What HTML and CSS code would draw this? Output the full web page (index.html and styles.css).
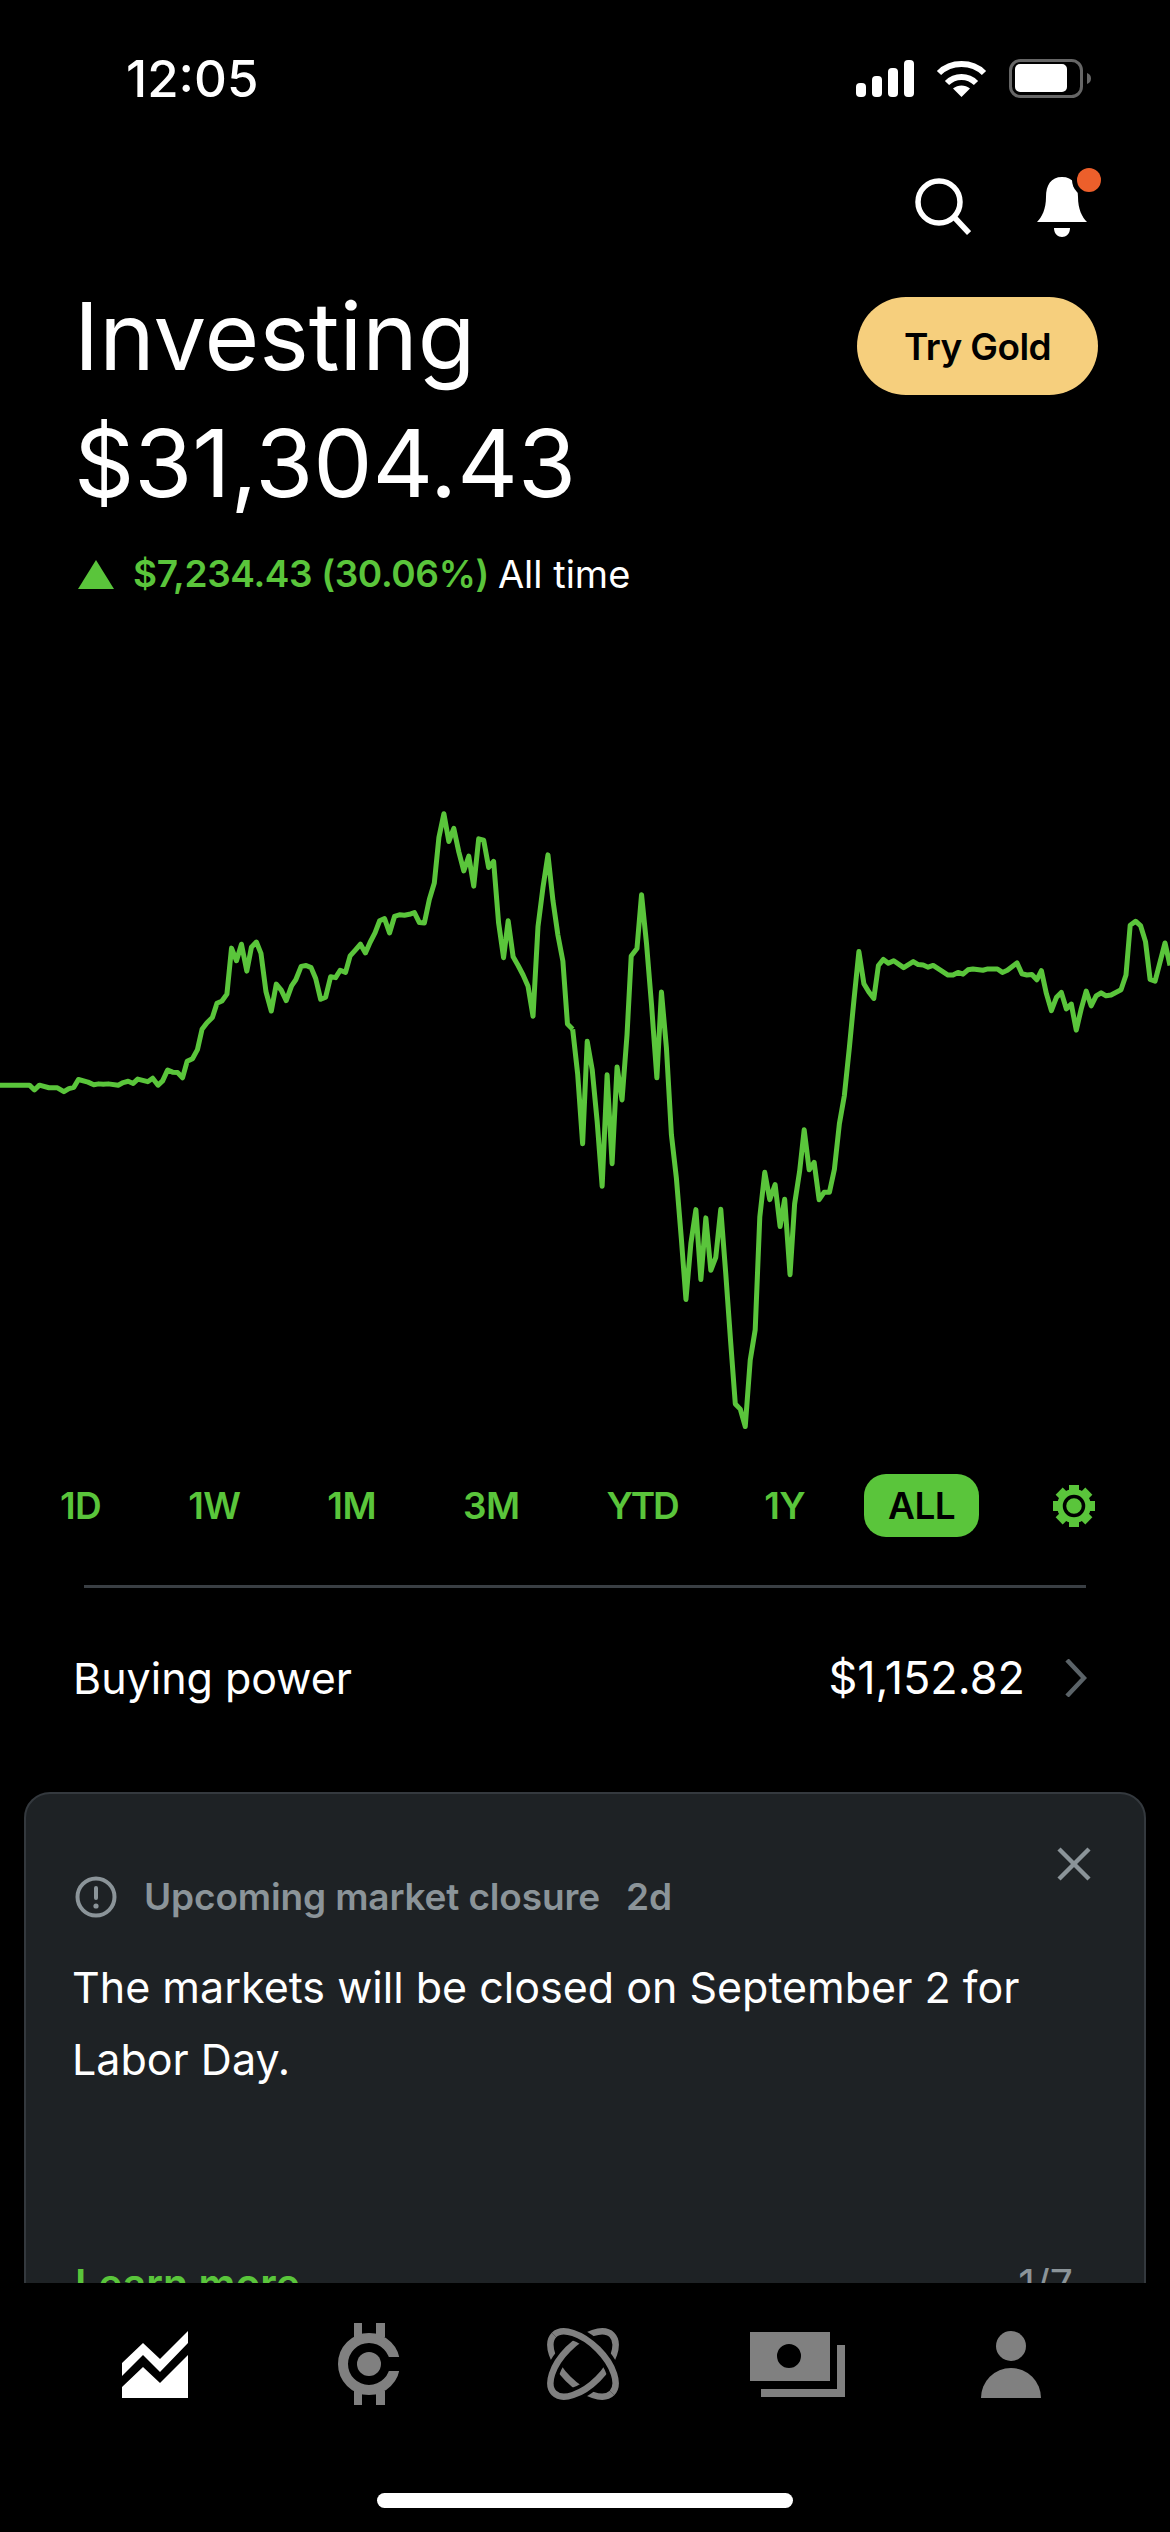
FILE: index.html
```html
<!DOCTYPE html>
<html lang="en">
<head>
  <meta charset="UTF-8" />
  <meta name="viewport" content="width=device-width, initial-scale=1" />
  <title>Investing</title>
  <link rel="stylesheet" href="styles.css">
</head>
<body>
  <div class="screen">
    <main class="content">

      <div class="status">
        <span class="time">12:05</span>
        <div class="status-icons">
          <svg width="58" height="37" viewBox="0 0 58 37" fill="#fff">
            <rect x="0" y="23" width="10" height="14" rx="4" />
            <rect x="16" y="16" width="10" height="21" rx="4" />
            <rect x="32" y="8" width="10" height="29" rx="4" />
            <rect x="48" y="0" width="10" height="37" rx="4" />
          </svg>
          <svg width="51" height="37" viewBox="0 0 51 37" fill="none" stroke="#fff" stroke-width="6">
            <path d="M3 13 C15 1 36 1 48 13" />
            <path d="M11 23 C19 15 32 15 40 23" />
            <path d="M25.5 37 L17 28.5 C22 24.5 29 24.5 34 28.5 Z" fill="#fff" stroke="none" />
          </svg>
          <svg width="82" height="39" viewBox="0 0 82 39">
            <rect x="1.5" y="1.5" width="71" height="36" rx="10" fill="none" stroke="#666" stroke-width="3" />
            <rect x="6" y="5" width="52" height="28" rx="5" fill="#fff" />
            <path d="M78 14 C81 15 82 17 82 19.5 C82 22 81 24 78 25 Z" fill="#666" />
          </svg>
        </div>
      </div>

      <div class="actions">
        <svg width="56" height="75" viewBox="0 0 56 75" fill="none" stroke="#fff" stroke-width="5.5">
          <circle cx="24" cy="37" r="21" />
          <line x1="39" y1="52" x2="54" y2="68" />
        </svg>
        <svg width="65" height="75" viewBox="0 0 65 75">
          <path d="M25 12 C14 12 9 20 9 32 C9 44 5 52 0 57 H50 C45 52 41 44 41 32 C41 20 36 12 25 12 Z" fill="#fff" />
          <path d="M17 63 H33 C33 69 29 72 25 72 C21 72 17 69 17 63 Z" fill="#fff" />
          <circle cx="52" cy="15" r="17" fill="#000" />
          <circle cx="52" cy="15" r="12" fill="#ec5f2b" />
        </svg>
      </div>

      <div class="title-row">
        <h1>Investing<br>$31,304.43</h1>
        <button class="gold-btn">Try Gold</button>
      </div>

      <div class="change">
        <svg width="36" height="29" viewBox="0 0 36 29"><polygon points="18,0 36,29 0,29" fill="#5ac53b" /></svg>
        <span class="change-value">$7,234.43 (30.06%)</span>
        <span class="change-label">All time</span>
      </div>

      <!-- chart points traced from crops: 2.6133 units per px across, 2.3059 down -->
      <svg class="chart" width="1170" height="680" viewBox="0 0 3057.6 1568" preserveAspectRatio="none" fill="none" stroke="#5ac53b" stroke-linejoin="round">
        <polyline vector-effect="non-scaling-stroke" points="0,706 77,706 90,717 103,706 128,712 150,712 167,721 180,714 193,711 205,693 230,699 245,705 258,703 270,704 283,703 309,706 322,700 335,697 348,702 360,692 386,698 399,690 413,706 425,696 438,671 451,676 464,677 477,689 489,651 503,645 516,624 528,577 541,562 555,550 567,517 580,512 593,496 605,390 618,419 631,381 645,443 657,388 670,376 682,402 695,490 709,535 722,473 735,487 748,511 762,477 773,463 787,432 800,430 813,435 825,460 838,508 851,503 864,456 877,458 889,441 903,446 915,408 928,395 942,381 955,401 967,377 980,355 992,327 1005,322 1018,355 1031,317 1044,313 1057,314 1070,312 1083,308 1096,331 1109,332 1122,278 1135,240 1147,135 1160,80 1173,144 1186,114 1199,168 1212,212 1225,178 1238,247 1251,138 1264,141 1277,204 1290,190 1303,332 1316,412 1328,327 1341,410 1354,430 1367,452 1380,478 1393,547 1406,340 1419,250 1432,175 1445,280 1458,360 1471,420 1483,565 1496.6,577" />
        <polyline vector-effect="non-scaling-stroke" transform="translate(1489.6 0)" points="7,577 20,680 33,841 45,605 58,670 71,790 84,939 97,682 110,887 123,664 136,740 149,590 160,408 175,391 187,267 200,380 213,520 227,689 239,491 252,620 265,820 278,920 291,1060 303,1200 316,1070 329,993 342,1154 355,1012 368,1133 381,1103 394,992 407,1140 420,1300 432,1441 445,1453 458,1493 471,1340 484,1270 496,1010 509,907 522,970 536,935 549,1032 561,969 575,1143 587,980 600,905 612,809 625,901 638,884 651,970 664,953 678,953 691,900 704,795 717,730 730,620 742,510 755,398 768,472 781,491 794,506 806,430 819,416 832,425 846,419 872,435 897,421 910,428 923,429 936,434 949,430 988,452 1001,452 1014,446 1027,450 1040,440 1053,438 1079,441 1092,438 1117,438 1130,446 1143,441 1168,424 1181,449 1194,452 1207,451 1220,463 1232,442 1245,495 1258,534 1271,504 1284,492 1297,530 1310,519 1323,579 1336,530 1349,489 1362,523 1375,500 1388,493 1401,500 1414,498 1440,486 1453,452 1464,337 1478,328 1491,338 1504,375 1516,462 1529,466 1555,378 1568,430" />
      </svg>

      <div class="ranges">
        <span class="range">1D</span>
        <span class="range">1W</span>
        <span class="range">1M</span>
        <span class="range">3M</span>
        <span class="range range-tight">YTD</span>
        <span class="range">1Y</span>
        <span class="range active">ALL</span>
        <svg class="gear" width="42" height="42" viewBox="0 0 42 42">
          <g fill="#5ac53b">
            <circle cx="21" cy="21" r="17" />
            <rect x="16" y="0" width="10" height="42" />
            <rect x="16" y="0" width="10" height="42" transform="rotate(45 21 21)" />
            <rect x="16" y="0" width="10" height="42" transform="rotate(90 21 21)" />
            <rect x="16" y="0" width="10" height="42" transform="rotate(135 21 21)" />
          </g>
          <circle cx="21" cy="21" r="9.5" fill="#5ac53b" stroke="#000" stroke-width="3.5" />
        </svg>
      </div>

      <div class="divider"></div>

      <div class="buying">
        <span>Buying power</span>
        <span class="buying-value">$1,152.82</span>
        <svg width="22" height="38" viewBox="0 0 22 38" fill="none" stroke="#5b6368" stroke-width="4.5">
          <polyline points="2,1 19,19 2,37" />
        </svg>
      </div>

      <section class="card">
        <svg class="close" width="34" height="34" viewBox="0 0 34 34" stroke="#8b9499" stroke-width="4.5">
          <line x1="2" y1="2" x2="32" y2="32" />
          <line x1="32" y1="2" x2="2" y2="32" />
        </svg>
        <div class="card-head">
          <svg width="42" height="42" viewBox="0 0 42 42">
            <circle cx="21" cy="21" r="18.5" fill="none" stroke="#8b9499" stroke-width="4" />
            <rect x="19" y="10" width="4" height="14" rx="2" fill="#8b9499" />
            <circle cx="21" cy="30" r="2.6" fill="#8b9499" />
          </svg>
          <span class="card-title">Upcoming market closure</span>
          <span class="card-age">2d</span>
        </div>
        <p class="card-text">The markets will be closed on September 2 for Labor Day.</p>
        <div class="card-foot">
          <span class="learn">Learn more</span>
          <span class="pager">1/7</span>
        </div>
      </section>

    </main>

    <nav class="tabbar">
      <div class="tabs">
        <svg width="66" height="67" viewBox="0 0 66 67" fill="#fff">
          <polygon points="0,32 21,12 38,28 66,0 66,12 38,41 21,24 0,45" />
          <polygon points="0,56 21,36 38,52 66,24 66,67 0,67" />
        </svg>
        <svg width="62" height="82" viewBox="0 0 62 82" fill="#808080">
          <rect x="16" y="0" width="8" height="14" />
          <rect x="38" y="0" width="9" height="14" />
          <rect x="16" y="68" width="8" height="14" />
          <rect x="38" y="68" width="9" height="14" />
          <circle cx="31" cy="41" r="26" fill="#000" stroke="#808080" stroke-width="10" />
          <rect x="47" y="34" width="16" height="14" fill="#000" />
          <circle cx="31" cy="41" r="12" />
        </svg>
        <svg width="72" height="72" viewBox="0 0 72 72" fill="none" stroke-width="6.5">
          <defs>
            <clipPath id="orbitTop"><polygon points="0,0 72,0 72,72" /></clipPath>
          </defs>
          <ellipse cx="36" cy="36" rx="41" ry="21" stroke="#808080" transform="rotate(45 36 36)" />
          <ellipse cx="36" cy="36" rx="41" ry="21" stroke="#000" stroke-width="14" transform="rotate(-45 36 36)" />
          <ellipse cx="36" cy="36" rx="41" ry="21" stroke="#808080" transform="rotate(-45 36 36)" />
          <g clip-path="url(#orbitTop)">
            <ellipse cx="36" cy="36" rx="41" ry="21" stroke="#000" stroke-width="14" transform="rotate(45 36 36)" />
            <ellipse cx="36" cy="36" rx="41" ry="21" stroke="#808080" transform="rotate(45 36 36)" />
          </g>
        </svg>
        <svg width="95" height="65" viewBox="0 0 95 65" fill="#808080">
          <path fill-rule="evenodd" d="M0 0 H80 V49 H0 Z M39 12 A12 12 0 1 0 39 36 A12 12 0 1 0 39 12 Z" />
          <polygon points="87,13 95,13 95,65 11,65 11,57 87,57" />
        </svg>
        <svg width="60" height="67" viewBox="0 0 60 67" fill="#808080">
          <circle cx="30" cy="15" r="15" />
          <path d="M0 67 A30 30 0 0 1 60 67 Z" />
        </svg>
      </div>
      <div class="home-bar"></div>
    </nav>
  </div>
</body>
</html>
```

FILE: styles.css
```css
body {
  margin: 0;
  background: #000;
  color: #fff;
  font-family: Inter, "Liberation Sans", sans-serif;
}
svg {
  display: block;
  flex: none;
}
.screen {
  width: 1170px;
  height: 2532px;
  display: flex;
  flex-direction: column;
  overflow: hidden;
}
.content {
  flex: 1;
  min-height: 0;
  overflow: hidden;
}
.status {
  height: 64px;
  margin-top: 46px;
  padding: 0 79px 0 126px;
  display: flex;
  align-items: center;
  justify-content: space-between;
}
.time {
  font-size: 51px;
  font-weight: 500;
}
.status-icons {
  display: flex;
  align-items: center;
  gap: 22px;
}
.actions {
  margin-top: 55px;
  padding-right: 68px;
  display: flex;
  justify-content: flex-end;
  gap: 66px;
}
.title-row {
  margin-top: 33px;
  padding: 0 72px 0 74px;
  display: flex;
  justify-content: space-between;
  align-items: flex-start;
}
h1 {
  margin: 0;
  font-size: 94px;
  font-weight: 400;
  line-height: 127px;
}
.gold-btn {
  width: 241px;
  height: 98px;
  margin-top: 24px;
  border: none;
  border-radius: 49px;
  background: #f6cf7d;
  color: #000;
  font-family: inherit;
  font-size: 37px;
  font-weight: 600;
  letter-spacing: -0.6px;
}
.change {
  margin-top: 25px;
  padding-left: 78px;
  display: flex;
  align-items: center;
  font-size: 37px;
  line-height: 44px;
}
.change-value {
  margin: 0 9px 0 19px;
  color: #5ac53b;
  font-weight: 600;
  letter-spacing: -0.36px;
}
.change-label {
  font-size: 38px;
}
.chart {
  margin-top: 183px;
  stroke-width: 5px;
}
.ranges {
  margin-top: 15px;
  padding-left: 36px;
  display: flex;
  align-items: center;
  gap: 39px;
}
.range {
  height: 63px;
  padding: 0 24px;
  border-radius: 22px;
  color: #5ac53b;
  font-size: 37px;
  font-weight: 600;
  letter-spacing: -0.6px;
  line-height: 63px;
}
.range-tight {
  letter-spacing: -2.4px;
}
.range.active {
  margin-left: -4px;
  background: #5ac53b;
  color: #000;
}
.gear {
  margin-left: 35px;
}
.divider {
  height: 3px;
  margin: 48px 84px 0;
  background: #3a3f44;
}
.buying {
  margin-top: 63px;
  padding: 0 83px 0 73px;
  display: flex;
  align-items: center;
  font-size: 43px;
  line-height: 54px;
}
.buying-value {
  margin: 0 40px 0 auto;
  font-size: 45px;
}
.card {
  position: relative;
  margin: 87px 24px 0;
  padding: 80px 71px 40px 48px;
  border: 2px solid #34393e;
  border-radius: 26px;
  background: #1e2225;
}
.close {
  position: absolute;
  top: 53px;
  right: 53px;
}
.card-head {
  margin-left: 1px;
  display: flex;
  align-items: center;
  color: #8b9499;
  font-size: 37px;
  font-weight: 600;
}
.card-title {
  margin-left: 27px;
  letter-spacing: -0.15px;
}
.card-age {
  margin-left: 26px;
}
.card-text {
  margin: 32px 0 0 -2px;
  font-size: 43px;
  line-height: 72px;
}
.card-foot {
  margin-top: 166px;
  display: flex;
  justify-content: space-between;
  font-size: 41px;
  line-height: 46px;
}
.learn {
  margin-left: 1px;
  color: #5ac53b;
  font-weight: 600;
}
.pager {
  color: #8b9499;
}
.tabbar {
  height: 249px;
  flex: none;
  background: #000;
}
.tabs {
  height: 82px;
  padding: 40px 52px 0 48px;
  display: grid;
  grid-template-columns: repeat(5, 1fr);
  align-items: center;
  justify-items: center;
}
.home-bar {
  width: 416px;
  height: 15px;
  margin: 88px auto 0;
  border-radius: 8px;
  background: #fff;
}
```
